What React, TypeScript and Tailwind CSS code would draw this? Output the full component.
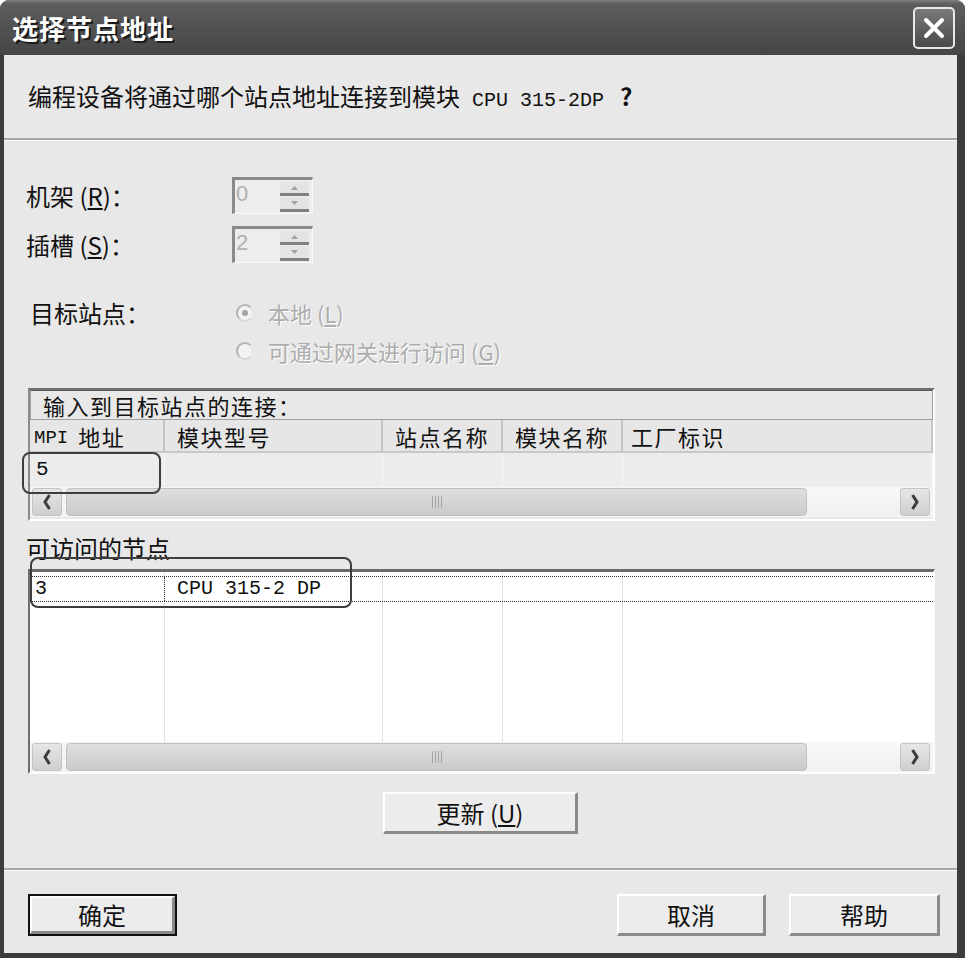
import React from "react";

const Chevron = ({ dir }: { dir: "left" | "right" }) => (
  <svg width="10" height="18" viewBox="0 0 10 18">
    <path
      d={dir === "left" ? "M7.5 2 L3 9 L7.5 16" : "M2.5 2 L7 9 L2.5 16"}
      fill="none"
      stroke="#3c3c3c"
      strokeWidth="3"
    />
  </svg>
);

function ScrollBar() {
  return (
    <div className="flex h-[30px] items-center bg-[#f4f4f4] pl-[2px] pr-[3px]">
      <div className="flex h-[28px] w-[30px] items-center justify-center rounded-[3px] border border-[#c4c4c4] bg-gradient-to-b from-[#e6e6e6] to-[#cfcfcf]">
        <Chevron dir="left" />
      </div>
      <div className="ml-[4px] flex h-[28px] w-[741px] items-center justify-center rounded-[4px] border border-[#c0c0c0] bg-gradient-to-b from-[#dedede] to-[#cbcbcb]">
        <div className="flex gap-[2px]">
          <div className="h-[12px] w-px bg-[#a6a6a6]" />
          <div className="h-[12px] w-px bg-[#a6a6a6]" />
          <div className="h-[12px] w-px bg-[#a6a6a6]" />
          <div className="h-[12px] w-px bg-[#a6a6a6]" />
        </div>
      </div>
      <div className="h-[28px] flex-1 bg-gradient-to-b from-[#f8f8f8] to-[#f0f0f0]" />
      <div className="flex h-[28px] w-[30px] items-center justify-center rounded-[3px] border border-[#c4c4c4] bg-gradient-to-b from-[#e6e6e6] to-[#cfcfcf]">
        <Chevron dir="right" />
      </div>
    </div>
  );
}

function Spinner({ value }: { value: string }) {
  return (
    <div className="flex h-[37px] w-[81px] border-b border-l-[3px] border-r border-t-[3px] border-b-[#f8f8f8] border-l-[#8a8a8a] border-r-[#f8f8f8] border-t-[#8a8a8a] bg-[#ededed]">
      <span className="pl-[1px] font-['Liberation_Sans',sans-serif] text-[22px] leading-[28px] text-[#b0b0b0]">
        {value}
      </span>
      <div className="ml-auto mr-[3px] mt-[2px] flex w-[29px] flex-col">
        <div className="flex h-[14px] items-center justify-center border-b-[3px] border-[#808080] bg-[#e4e4e4]">
          <svg width="7" height="4" viewBox="0 0 7 4">
            <path d="M0 4 L3.5 0 L7 4 Z" fill="#a0a0a0" />
          </svg>
        </div>
        <div className="mt-px flex h-[15px] items-center justify-center border-b-[3px] border-[#808080] bg-[#e4e4e4]">
          <svg width="7" height="4" viewBox="0 0 7 4">
            <path d="M0 0 L3.5 4 L7 0 Z" fill="#a0a0a0" />
          </svg>
        </div>
      </div>
    </div>
  );
}

function Radio({ checked }: { checked?: boolean }) {
  return (
    <span className="flex h-[18px] w-[18px] items-center justify-center rounded-full border-2 border-[#b4b4b4] border-r-[#e8e8e8] border-b-[#d8d8d8] bg-[#f2f2f2]">
      {checked && <span className="h-[6px] w-[6px] rounded-full bg-[#a2a2a2]" />}
    </span>
  );
}

function Btn({ children, w, def }: { children: React.ReactNode; w: string; def?: boolean }) {
  return (
    <div className={def ? `${w} h-[42px] border-2 border-[#111]` : `${w} h-[42px]`}>
      <div className="flex h-full w-full items-center justify-center border-b-[3px] border-l-2 border-r-[3px] border-t-2 border-b-[#8a8a8a] border-l-white border-r-[#8a8a8a] border-t-white bg-[#ececec] text-[24px] text-[#111]">
        {children}
      </div>
    </div>
  );
}

const cols = ["w-[135px]", "w-[218px]", "w-[120px]", "w-[120px]", "flex-1"];

export default function App() {
  return (
    <div className="h-[958px] w-[965px] bg-white font-['Noto_Sans_CJK_SC','Noto_Sans',sans-serif]">
      <div className="flex h-full w-full flex-col overflow-hidden rounded-t-[9px] bg-[#3c3c3c]">
        {/* Title bar */}
        <div className="flex h-[55px] shrink-0 items-center justify-between bg-[linear-gradient(to_bottom,#808080_0px,#5e5e5e_4px,#525252_28px,#454545_55px)] pl-[12px] pr-[10px]">
          <span className="text-[26px] font-bold leading-none tracking-[1px] text-white [text-shadow:2px_2px_0_#1a1a1a]">
            选择节点地址
          </span>
          <div className="flex h-[42px] w-[42px] items-center justify-center rounded-[5px] border-2 border-[#e8e8e8] bg-gradient-to-b from-[#7a7a7a] to-[#4a4a4a]">
            <svg width="26" height="26" viewBox="0 0 26 26">
              <path d="M5 5 L21 21 M21 5 L5 21" stroke="white" strokeWidth="4" strokeLinecap="round" />
            </svg>
          </div>
        </div>

        {/* Body */}
        <div className="mb-[5px] ml-[4px] mr-[8px] flex flex-1 flex-col bg-[#e8e8e8] text-[#111]">
          <div className="flex h-[83px] items-center pl-[24px] text-[24px]">
            <span>
              编程设备将通过哪个站点地址连接到模块
              <span className="ml-[12px] font-['Liberation_Mono',monospace] text-[20px]">CPU 315-2DP</span>
              <span className="ml-[16px] font-bold">?</span>
            </span>
          </div>
          <div className="h-[2px] bg-[#a6a6a6]" />
          <div className="h-px bg-white" />

          <div className="flex flex-col px-[22px]">
            <div className="mt-[36px] flex h-[37px] items-center">
              <span className="w-[206px] text-[24px]">机架 (<span className="underline">R</span>)：</span>
              <Spinner value="0" />
            </div>
            <div className="mt-[12px] flex h-[37px] items-center">
              <span className="w-[206px] text-[24px]">插槽 (<span className="underline">S</span>)：</span>
              <Spinner value="2" />
            </div>

            <div className="mt-[36px] flex h-[28px] items-center">
              <span className="w-[210px] pl-[4px] text-[24px]">目标站点：</span>
              <Radio checked />
              <span className="ml-[14px] text-[22px] text-[#adadad] [text-shadow:1px_1px_0_#fff]">
                本地 (<span className="underline">L</span>)
              </span>
            </div>
            <div className="mt-[10px] flex h-[28px] items-center pl-[210px]">
              <Radio />
              <span className="ml-[14px] text-[22px] text-[#adadad] [text-shadow:1px_1px_0_#fff]">
                可通过网关进行访问 (<span className="underline">G</span>)
              </span>
            </div>

            {/* Table 1 */}
            <div className="relative ml-[2px] mt-[23px] flex h-[133px] flex-col border-2 border-b-white border-l-[#8a8a8a] border-r-white border-t-[#6e6e6e] bg-[#e8e8e8]">
              <div className="flex h-[30px] items-center border border-[#a0a0a0] border-t-[#5a5a5a] pl-[12px] text-[22px] leading-[22px] tracking-[1.5px]">
                输入到目标站点的连接：
              </div>
              <div className="flex h-[33px] text-[22px] leading-[22px]">
                {["MPI 地址", "模块型号", "站点名称", "模块名称", "工厂标识"].map((t, i) => (
                  <div
                    key={t}
                    className={`${cols[i]} flex items-center border-b-2 border-r-2 border-b-[#c8c8c8] border-r-[#c4c4c4] bg-[#e6e6e6] tracking-[1.5px] ${i === 0 ? "pl-[4px]" : i === 4 ? "pl-[8px]" : "pl-[12px]"}`}
                  >
                    {i === 0 ? (
                      <>
                        <span className="mt-[4px] font-['Liberation_Mono',monospace] text-[19px] tracking-normal">MPI</span>
                        <span className="ml-[10px]">地址</span>
                      </>
                    ) : (
                      t
                    )}
                  </div>
                ))}
              </div>
              <div className="flex h-[34px] bg-[#ececec]">
                {cols.map((c, i) => (
                  <div key={i} className={`${c} flex items-center border-r border-[#f6f6f6] pl-[6px]`}>
                    {i === 0 && <span className="font-['Liberation_Mono',monospace] text-[21px]">5</span>}
                  </div>
                ))}
              </div>
              <ScrollBar />
              <div className="absolute left-[-8px] top-[62px] h-[42px] w-[139px] rounded-[8px] border-2 border-[#3e3e3e]" />
            </div>

            <div className="mt-[14px] h-[26px] text-[24px] leading-[26px]">可访问的节点</div>

            {/* Table 2 */}
            <div className="relative ml-[2px] mt-[8px] flex h-[205px] flex-col border-b-2 border-l-2 border-r-2 border-t-[3px] border-b-white border-l-[#6e6e6e] border-r-white border-t-[#6a6a6a] bg-white">
              <div className="flex flex-1 flex-col">
                <div className="relative flex h-[170px]">
                  {cols.map((c, i) => (
                    <div key={i} className={`${c} ${i < 4 ? "border-r border-[#e2e2e2]" : ""}`} />
                  ))}
                  <div className="absolute left-0 right-0 top-[4px] flex h-[26px] border-y border-dotted border-[#333]">
                    <div className="flex w-[135px] items-center border-x border-dotted border-[#333] pl-[4px] font-['Liberation_Mono',monospace] text-[20px]">
                      3
                    </div>
                    <div className="flex items-center pl-[12px] font-['Liberation_Mono',monospace] text-[20px]">
                      CPU 315-2 DP
                    </div>
                  </div>
                </div>
                <ScrollBar />
              </div>
              <div className="absolute left-[0px] top-[-15px] h-[51px] w-[322px] rounded-[8px] border-2 border-[#3e3e3e]" />
            </div>

            <div className="mt-[18px] self-center">
              <Btn w="w-[195px]">
                更新 (<span className="underline">U</span>)
              </Btn>
            </div>
          </div>

          <div className="mt-[34px] h-[2px] bg-[#a6a6a6]" />
          <div className="h-px bg-white" />

          <div className="mt-[23px] flex pl-[24px] pr-[17px]">
            <Btn w="w-[149px]" def>
              确定
            </Btn>
            <div className="flex-1" />
            <Btn w="w-[149px]">取消</Btn>
            <div className="w-[23px]" />
            <Btn w="w-[151px]">帮助</Btn>
          </div>
        </div>
      </div>
    </div>
  );
}
